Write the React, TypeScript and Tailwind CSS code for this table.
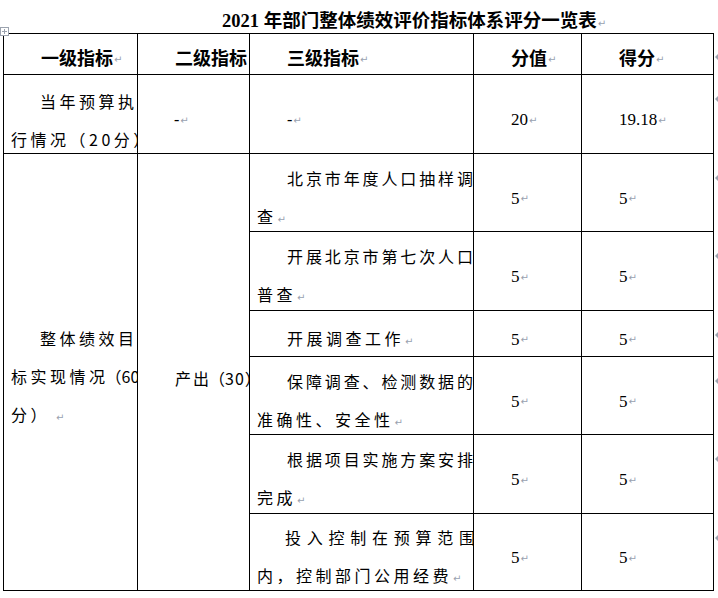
import React from 'react';

const CJK = { fontFamily: '"Noto Sans CJK SC", "Noto Sans", sans-serif' };
const SERIF = { fontFamily: '"Liberation Serif", "Noto Sans CJK SC", serif' };

// paragraph mark, as Word shows it
function Mark({ gap = false }: { gap?: boolean }) {
  return (
    <span
      className={`text-[10px] text-gray-400 tracking-normal font-normal ${gap ? 'ml-[6px]' : 'ml-[1px]'}`}
      style={{ fontFamily: '"DejaVu Sans", sans-serif' }}
    >
      ↵
    </span>
  );
}

function RowEnd() {
  return (
    <div className="pt-[21px] overflow-hidden">
      <svg width="4" height="6" viewBox="0 0 4 6">
        <polygon points="4,0 1,3 4,6" fill="#9ca3af" />
      </svg>
    </div>
  );
}

type HeadProps = { text: string; mark?: boolean; first?: boolean };

function Head({ text, mark = true, first = false }: HeadProps) {
  return (
    <div
      className={`border-t border-r border-b border-black ${first ? 'border-l' : ''} pt-[10px] flex items-center pl-[37px] overflow-hidden whitespace-nowrap text-[18px] font-bold`}
      style={SERIF}
    >
      {text}
      {mark && <Mark />}
    </div>
  );
}

function Num({ value }: { value: string }) {
  return (
    <div
      className="border-r border-b border-black pt-[12px] flex items-center pl-[37px] text-[17px] whitespace-nowrap overflow-hidden"
      style={SERIF}
    >
      {value}
      <Mark />
    </div>
  );
}

// item in the third column: first line justified, second line flows
function Item({ first, rest, lead = 30, width = 186 }: { first: string; rest?: string; lead?: number; width?: number }) {
  return (
    <div className="border-r border-b border-black pt-[12px] flex flex-col justify-center pl-[7px] overflow-hidden text-[16px]" style={CJK}>
      {rest ? (
        <>
          <div
            className="leading-[38px] whitespace-nowrap [text-align-last:justify]"
            style={{ marginLeft: lead, width }}
          >
            {first}
          </div>
          <div className="leading-[38px] whitespace-nowrap tracking-[3.5px]">
            {rest}
            <Mark />
          </div>
        </>
      ) : (
        <div className="leading-[38px] whitespace-nowrap tracking-[3.5px] ml-[30px]">
          {first}
          <Mark />
        </div>
      )}
    </div>
  );
}

export default function App() {
  return (
    <div className="relative w-[718px] h-[598px] bg-white text-black overflow-hidden">
      {/* table move handle */}
      <svg className="absolute left-0 top-[27px]" width="9" height="9" viewBox="0 0 9 9">
        <rect x="0.5" y="0.5" width="8" height="8" fill="white" stroke="#9ca3af" />
        <path d="M4.5 2v5M2 4.5h5" stroke="#9ca3af" strokeWidth="1" />
      </svg>

      <div className="h-[33px] pl-[222px] pt-[8px] leading-[26px] text-[18.5px] font-bold whitespace-nowrap" style={SERIF}>
        2021 年部门整体绩效评价指标体系评分一览表
        <Mark />
      </div>

      <div className="ml-[3px] grid grid-cols-[135px_112px_224px_108px_132px_4px] grid-rows-[42px_79px_78px_79px_46px_78px_79px_77px]">
        <Head text="一级指标" first />
        <Head text="二级指标" mark={false} />
        <Head text="三级指标" />
        <Head text="分值" />
        <Head text="得分" />
        <RowEnd />

        {/* 当年预算执行情况 */}
        <div className="border-l border-r border-b border-black pt-[12px] flex flex-col justify-center pl-[7px] overflow-hidden text-[16px] tracking-[3.5px]" style={CJK}>
          <div className="leading-[38px] whitespace-nowrap ml-[29px]">当年预算执</div>
          <div className="leading-[38px] whitespace-nowrap">行情况（20分）</div>
        </div>
        <div className="border-r border-b border-black pt-[12px] flex items-center pl-[36px] text-[16px]" style={SERIF}>
          -<Mark />
        </div>
        <div className="border-r border-b border-black pt-[12px] flex items-center pl-[37px] text-[16px]" style={SERIF}>
          -<Mark />
        </div>
        <Num value="20" />
        <Num value="19.18" />
        <RowEnd />

        {/* 整体绩效目标实现情况 */}
        <div className="row-span-6 border-l border-r border-b border-black pt-[12px] flex flex-col justify-center pl-[7px] overflow-hidden text-[16px] tracking-[3.5px]" style={CJK}>
          <div className="leading-[38px] whitespace-nowrap ml-[29px]">整体绩效目</div>
          <div className="leading-[38px] whitespace-nowrap">
            标实现情<span className="tracking-[0.5px]">况</span><span className="tracking-normal">（60</span>
          </div>
          <div className="leading-[38px] whitespace-nowrap">
            分）
            <Mark gap />
          </div>
        </div>
        <div className="row-span-6 border-r border-b border-black pt-[12px] flex items-center pl-[37px] overflow-hidden text-[16px] tracking-[2px]" style={CJK}>
          <div className="leading-[38px] whitespace-nowrap">
            产<span className="tracking-normal">出（</span><span className="tracking-[1px]">30</span>）
          </div>
        </div>

        <Item first="北京市年度人口抽样调" rest="查" />
        <Num value="5" />
        <Num value="5" />
        <RowEnd />

        <Item first="开展北京市第七次人口" rest="普查" />
        <Num value="5" />
        <Num value="5" />
        <RowEnd />

        <Item first="开展调查工作" />
        <Num value="5" />
        <Num value="5" />
        <RowEnd />

        <Item first="保障调查、检测数据的" rest="准确性、安全性" />
        <Num value="5" />
        <Num value="5" />
        <RowEnd />

        <Item first="根据项目实施方案安排" rest="完成" />
        <Num value="5" />
        <Num value="5" />
        <RowEnd />

        <Item first="投入控制在预算范围" rest="内，控制部门公用经费" lead={28} width={190} />
        <Num value="5" />
        <Num value="5" />
        <RowEnd />
      </div>
    </div>
  );
}
